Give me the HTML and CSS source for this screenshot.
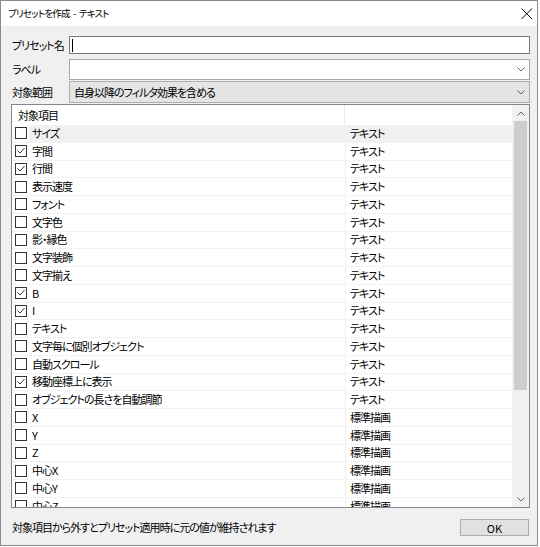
FILE: index.html
```html
<!DOCTYPE html>
<html lang="ja">
<head>
<meta charset="utf-8">
<title>プリセットを作成 - テキスト</title>
<link rel="stylesheet" href="styles.css">
</head>
<body>
<div class="window">
  <div class="titlebar">
    <span class="title">プリセットを作成 - テキスト</span>
    <svg class="close" width="12" height="12" viewBox="0 0 12 12"><path d="M0.5 0.5 L11 11 M11 0.5 L0.5 11" stroke="#000" stroke-width="1" fill="none"/></svg>
  </div>
  <div class="content">
    <div class="form">
      <div class="frow r1">
        <span class="lbl">プリセット名</span>
        <div class="input"><span class="caret"></span></div>
      </div>
      <div class="frow r2">
        <span class="lbl">ラベル</span>
        <div class="combo"><span class="val"></span><svg class="chev" width="8" height="5" viewBox="0 0 8 5"><path d="M0.5 0.5 L4 4 L7.5 0.5" stroke="#606060" fill="none"/></svg></div>
      </div>
      <div class="frow r3">
        <span class="lbl">対象範囲</span>
        <div class="combo dd"><span class="val">自身以降のフィルタ効果を含める</span><svg class="chev" width="8" height="5" viewBox="0 0 8 5"><path d="M0.5 0.5 L4 4 L7.5 0.5" stroke="#606060" fill="none"/></svg></div>
      </div>
    </div>
    <div class="list">
      <div class="table">
        <div class="thead"><div class="c1">対象項目</div><div class="c2"></div></div>
        <div class="tbody">
          <div class="row hl"><div class="c1"><span class="cb"></span><span class="name">サイズ</span></div><div class="c2">テキスト</div></div>
          <div class="row"><div class="c1"><span class="cb on"><svg width="10" height="10" viewBox="0 0 10 10"><path d="M1.5 4.5 L4 7 L8.5 2" stroke="#333" fill="none"/></svg></span><span class="name">字間</span></div><div class="c2">テキスト</div></div>
          <div class="row"><div class="c1"><span class="cb on"><svg width="10" height="10" viewBox="0 0 10 10"><path d="M1.5 4.5 L4 7 L8.5 2" stroke="#333" fill="none"/></svg></span><span class="name">行間</span></div><div class="c2">テキスト</div></div>
          <div class="row"><div class="c1"><span class="cb"></span><span class="name">表示速度</span></div><div class="c2">テキスト</div></div>
          <div class="row"><div class="c1"><span class="cb"></span><span class="name">フォント</span></div><div class="c2">テキスト</div></div>
          <div class="row"><div class="c1"><span class="cb"></span><span class="name">文字色</span></div><div class="c2">テキスト</div></div>
          <div class="row"><div class="c1"><span class="cb"></span><span class="name">影・縁色</span></div><div class="c2">テキスト</div></div>
          <div class="row"><div class="c1"><span class="cb"></span><span class="name">文字装飾</span></div><div class="c2">テキスト</div></div>
          <div class="row"><div class="c1"><span class="cb"></span><span class="name">文字揃え</span></div><div class="c2">テキスト</div></div>
          <div class="row"><div class="c1"><span class="cb on"><svg width="10" height="10" viewBox="0 0 10 10"><path d="M1.5 4.5 L4 7 L8.5 2" stroke="#333" fill="none"/></svg></span><span class="name">B</span></div><div class="c2">テキスト</div></div>
          <div class="row"><div class="c1"><span class="cb on"><svg width="10" height="10" viewBox="0 0 10 10"><path d="M1.5 4.5 L4 7 L8.5 2" stroke="#333" fill="none"/></svg></span><span class="name">I</span></div><div class="c2">テキスト</div></div>
          <div class="row"><div class="c1"><span class="cb"></span><span class="name">テキスト</span></div><div class="c2">テキスト</div></div>
          <div class="row"><div class="c1"><span class="cb"></span><span class="name">文字毎に個別オブジェクト</span></div><div class="c2">テキスト</div></div>
          <div class="row"><div class="c1"><span class="cb"></span><span class="name">自動スクロール</span></div><div class="c2">テキスト</div></div>
          <div class="row"><div class="c1"><span class="cb on"><svg width="10" height="10" viewBox="0 0 10 10"><path d="M1.5 4.5 L4 7 L8.5 2" stroke="#333" fill="none"/></svg></span><span class="name">移動座標上に表示</span></div><div class="c2">テキスト</div></div>
          <div class="row"><div class="c1"><span class="cb"></span><span class="name">オブジェクトの長さを自動調節</span></div><div class="c2">テキスト</div></div>
          <div class="row"><div class="c1"><span class="cb"></span><span class="name">X</span></div><div class="c2">標準描画</div></div>
          <div class="row"><div class="c1"><span class="cb"></span><span class="name">Y</span></div><div class="c2">標準描画</div></div>
          <div class="row"><div class="c1"><span class="cb"></span><span class="name">Z</span></div><div class="c2">標準描画</div></div>
          <div class="row"><div class="c1"><span class="cb"></span><span class="name">中心X</span></div><div class="c2">標準描画</div></div>
          <div class="row"><div class="c1"><span class="cb"></span><span class="name">中心Y</span></div><div class="c2">標準描画</div></div>
          <div class="row"><div class="c1"><span class="cb"></span><span class="name">中心Z</span></div><div class="c2">標準描画</div></div>
        </div>
      </div>
      <div class="vscroll">
        <div class="arrow"><svg width="8" height="5" viewBox="0 0 8 5"><path d="M0.5 4.5 L4 1 L7.5 4.5" stroke="#606060" fill="none"/></svg></div>
        <div class="track"><div class="thumb"></div></div>
        <div class="arrow"><svg width="8" height="5" viewBox="0 0 8 5"><path d="M0.5 0.5 L4 4 L7.5 0.5" stroke="#606060" fill="none"/></svg></div>
      </div>
    </div>
    <div class="footer">
      <span class="status">対象項目から外すとプリセット適用時に元の値が維持されます</span>
      <button class="ok" type="button">OK</button>
    </div>
  </div>
</div>
</body>
</html>
```

FILE: styles.css
```css
* { box-sizing: border-box; }
html, body { margin: 0; padding: 0; background: #ffffff; }
body {
  font-family: "Noto Sans CJK JP", "Noto Sans", sans-serif;
  font-size: 11px;
  font-feature-settings: "palt";
  letter-spacing: -1px;
  color: #000;
  line-height: 1;
}
.window {
  width: 538px;
  height: 546px;
  border: 1px solid #8a8a8a;
  background: #f0f0f0;
  display: flex;
  flex-direction: column;
}
.titlebar {
  height: 25px;
  background: #fff;
  display: flex;
  align-items: center;
  justify-content: space-between;
  padding: 0 4px 0 7px;
  flex: none;
}
.title { font-size: 9.5px; letter-spacing: -0.8px; word-spacing: 2px; white-space: pre; }
.close { display: block; margin-top: 1px; }
.content {
  flex: 1;
  display: flex;
  flex-direction: column;
  padding: 10px 7px 0 10px;
}
.form { display: flex; flex-direction: column; flex: none; }
.frow { display: flex; align-items: center; }
.lbl { width: 58px; flex: none; padding-left: 1px; white-space: nowrap; }
.r1 { height: 18px; margin-bottom: 5px; }
.r2 { height: 21px; margin-bottom: 1px; }
.r3 { height: 22px; margin-bottom: 1px; }
.input {
  flex: 1;
  height: 100%;
  background: #fff;
  border: 1px solid #7a7a7a;
  display: flex;
  align-items: center;
  padding-left: 2px;
}
.caret { width: 1px; height: 13px; background: #000; }
.combo {
  flex: 1;
  height: 100%;
  background: #fff;
  border: 1px solid #a6a6a6;
  display: flex;
  align-items: center;
  justify-content: space-between;
  padding: 0 4px 0 4px;
}
.combo.dd { background: #e5e5e5; border-color: #adadad; }
.combo .val { white-space: nowrap; }
.chev { display: block; }
.list {
  height: 404px;
  flex: none;
  border: 1px solid #828790;
  background: #fff;
  display: flex;
}
.table { width: 500px; flex: none; display: flex; flex-direction: column; overflow: hidden; }
.thead { height: 20px; display: flex; flex: none; }
.thead .c1 { width: 333px; padding-left: 6px; display: flex; align-items: center; border-right: 1px solid #e8e8e8; }
.thead .c2 { flex: 1; }
.tbody { flex: 1; overflow: hidden; }
.row {
  height: 17.75px;
  display: flex;
  border-bottom: 1px dotted #e6e6e6;
  white-space: nowrap;
}
.row .c1 { width: 334px; display: flex; align-items: center; border-right: 1px solid #f0f0f0; }
.row .c2 { flex: 1; display: flex; align-items: center; padding-left: 4px; }
.cb {
  width: 12px;
  height: 12px;
  border: 1px solid #333;
  margin: 0 2px 0 3px;
  flex: none;
  display: flex;
  align-items: center;
  justify-content: center;
  background: #fff;
}
.cb svg { display: block; }
.name { flex: 1; height: 100%; display: flex; align-items: center; padding-left: 3px; }
.row.hl .name, .row.hl .c2 { background: #f0f0f0; }
.vscroll { flex: 1; background: #f0f0f0; display: flex; flex-direction: column; }
.arrow { height: 16px; display: flex; align-items: center; justify-content: center; flex: none; }
.track { flex: 1; padding: 0 2px; }
.thumb { height: 269px; background: #cdcdcd; }
.footer {
  flex: 1;
  display: flex;
  align-items: center;
  justify-content: space-between;
  padding: 1px 1px 0 1px;
}
.status { white-space: nowrap; }
.ok {
  width: 69px;
  height: 17px;
  background: #e1e1e1;
  border: 1px solid #adadad;
  font-family: inherit;
  font-size: 11px;
  letter-spacing: 0;
  color: #000;
  padding: 0;
  margin: 0;
}
```
